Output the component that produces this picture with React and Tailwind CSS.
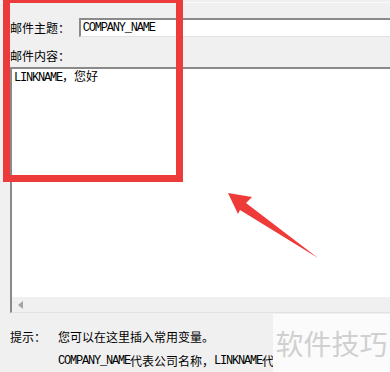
import React from 'react';

const cjk = { fontFamily: '"Noto Sans CJK SC", "Noto Sans", sans-serif' };
const mono = { fontFamily: '"Liberation Mono", "DejaVu Sans Mono", monospace' };

const Latin = ({ children }) => (
    <span className="text-[12px] tracking-[-1.2px]" style={mono}>{children}</span>
);

const Arrow = () => (
    <svg className="absolute left-0 top-0" width="390" height="372" viewBox="0 0 390 372">
        <path
            d="M228 193 L252 197 L246 203 L318 258 L240 210 L238 214 Z"
            fill="#ef3a3a"
        />
    </svg>
);

export default function App() {
    return (
        <div className="relative w-[390px] h-[372px] overflow-hidden bg-[#f0f0f0] text-[12px] text-black leading-none" style={cjk}>
            <div className="h-[2px]" />
            <div className="h-px bg-[#fafafa]" />

            {/* 主题 */}
            <div className="flex items-center pl-[10px] pt-[15px]">
                <span className="w-[73px]">邮件主题：</span>
                <div className="flex h-[19px] w-[330px] items-center border-t-2 border-l-2 border-b border-t-[#8a8a8a] border-l-[#8a8a8a] border-b-[#e2e2e2] bg-white pl-[2px]">
                    <Latin>COMPANY_NAME</Latin>
                </div>
            </div>

            <div className="pl-[10px] pt-[8px] h-[30px] flex items-center">邮件内容：</div>

            {/* 内容 */}
            <div className="ml-[10px] flex h-[246px] w-[400px] flex-col border-t-2 border-l-2 border-b border-t-[#8a8a8a] border-l-[#8a8a8a] border-b-[#e2e2e2] bg-white">
                <div className="flex-1 pl-[2px] pt-[1px]">
                    <Latin>LINKNAME</Latin>
                    <span>，您好</span>
                </div>
                <div className="flex h-[15px] items-center bg-[#f0f0f0] pl-[6px]">
                    <svg width="6" height="8" viewBox="0 0 6 8">
                        <path d="M5 0 L0 4 L5 8 Z" fill="#a3a3a3" />
                    </svg>
                </div>
            </div>

            {/* 提示 */}
            <div className="flex items-center pl-[10px] pt-[18px]">
                <span className="w-[48px]">提示：</span>
                <span>您可以在这里插入常用变量。</span>
            </div>
            <div className="flex items-center pl-[58px] pt-[12px]">
                <Latin>COMPANY_NAME</Latin>
                <span>代表公司名称，</span>
                <Latin>LINKNAME</Latin>
                <span>代</span>
            </div>

            {/* 红框标注 */}
            <div className="absolute left-[3px] top-[-4px] h-[186px] w-[180px] border-[7px] border-[#ec3b3b]" />
            <Arrow />

            {/* 水印 */}
            <div className="absolute left-[273px] top-[314px] flex h-[58px] w-[117px] items-center justify-center bg-[#fbfbfb] text-[28px] text-[#d0d0d0]">
                软件技巧
            </div>
        </div>
    );
}
